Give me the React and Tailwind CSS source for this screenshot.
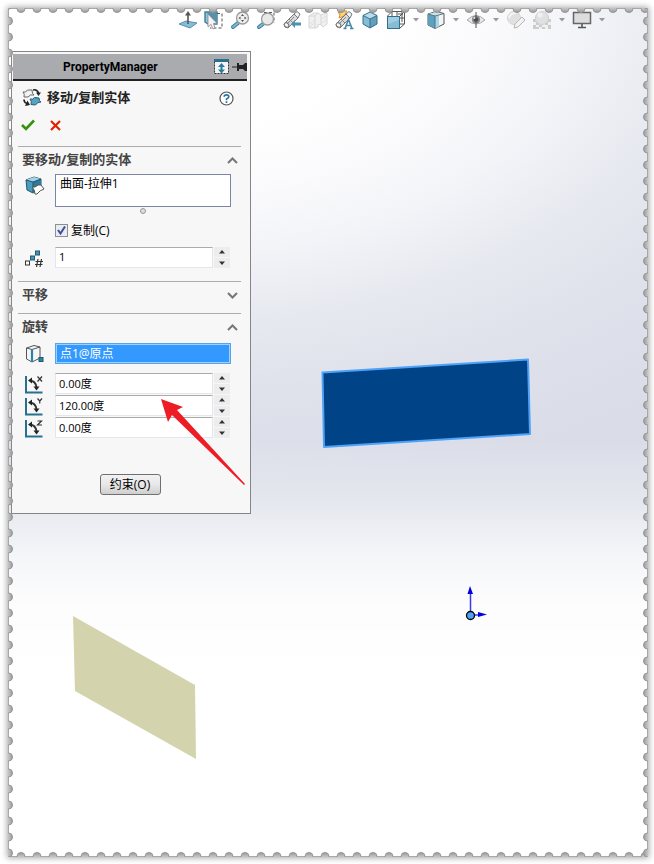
import { useState } from 'react';
import clsx from 'clsx';

function Icon({ children, size = 20, className }) {
    return (
        <svg width={size} height={size} viewBox={`0 0 ${size} ${size}`} fill="none" className={clsx('shrink-0', className)} aria-hidden="true">
            {children}
        </svg>
    );
}

const NormalToIcon = () => (
    <Icon>
        <path d="M1 14 8 11 19 13 12 18Z" fill="#86bdd4" stroke="#5591ad" />
        <path d="M10 14V3" stroke="#555" strokeWidth="1.6" />
        <path d="M7 5.5 10 1 13 5.5Z" fill="#555" />
    </Icon>
);

const SelectIcon = () => (
    <Icon>
        <path d="M1 2H13V14H4L1 12Z" fill="#8fc3d8" stroke="#3f7d98" strokeWidth="1.4" />
        <path d="M3 3 12 12V3Z" fill="#3f7d98" opacity=".7" />
        <path d="M13 3.5H18V18H6" stroke="#555" strokeDasharray="3 2" />
        <path d="M4 4V17L7 14.5 9 19 11 18 9.5 13.5H13Z" fill="#f5f5f5" stroke="#888" strokeWidth=".8" />
    </Icon>
);

const ZoomFitIcon = () => (
    <Icon>
        <path d="M8 13 3 17" stroke="#3c7e9c" strokeWidth="4" strokeLinecap="round" />
        <path d="M8 13 3 17" stroke="#7fb9d1" strokeWidth="2" strokeLinecap="round" />
        <circle cx="12.5" cy="8" r="6" fill="#eee" stroke="#999" strokeWidth="1.3" />
        <path d="M11 6 12.5 4 14 6ZM11 10 12.5 12 14 10ZM10.5 6.500 8.500 8 10.500 9.500ZM14.500 6.500 16.500 8 14.500 9.500Z" fill="#555" />
    </Icon>
);

const ZoomAreaIcon = () => (
    <Icon>
        <path d="M8 2.500H18V13" stroke="#555" strokeDasharray="3 2" />
        <path d="M7 14 3 17" stroke="#3c7e9c" strokeWidth="4" strokeLinecap="round" />
        <path d="M7 14 3 17" stroke="#7fb9d1" strokeWidth="2" strokeLinecap="round" />
        <circle cx="11.5" cy="9" r="6" fill="#e9e9e9" stroke="#999" strokeWidth="1.3" />
    </Icon>
);

const Telescope = () => (
    <g>
        <path d="M2 14 12 4 16 8 6 18Q2 18 2 14Z" fill="#d9d9d9" stroke="#777" />
        <path d="M12 4 15 1.500 18 4 16 8Z" fill="#f2f2f2" stroke="#777" />
        <path d="M7 9 11 13M5 14 12 7" stroke="#888" />
        <ellipse cx="4.500" cy="15" rx="2" ry="2.5" fill="#f8f8f8" stroke="#777" transform="rotate(-45 4.5 15)" />
    </g>
);

const PreviousViewIcon = () => (
    <Icon>
        <Telescope />
        <path d="M9 14 13 10V12.5H19V15.500H13V18Z" fill="#4f91b0" />
    </Icon>
);

const SectionIcon = () => (
    <Icon className="opacity-60">
        <path d="M1 6 6 3H10L13 5 19 3V14L15 17 13 15 10 14V17L8 18H1Z" fill="#e8e8e8" stroke="#bbb" />
        <path d="M1 6H7L10 3M7 6V18M13 5V15" stroke="#bbb" />
        <path d="M2 14 6 10M2 17 6 13M14 9 18 6M14 13 18 10" stroke="#c8c8c8" />
    </Icon>
);

const DynamicViewIcon = () => (
    <Icon>
        <path d="M4 2 7 3 9 1H13L10 6 5 8 6 5Z" fill="#fcd667" stroke="#df8c3c" />
        <Telescope />
        <path d="M11 18.500 14.500 9.500 18 18.500M12.500 15.500H17M9.500 18.500H12.500M16 18.500H19.500" stroke="#4b87a5" strokeWidth="1.6" />
    </Icon>
);

const CubeIcon = () => (
    <Icon>
        <path d="M10 2 17 5.500 10 9 3 5.500Z" fill="#b9dce9" />
        <path d="M3 5.500 10 9V18L3 14Z" fill="#86bdd6" />
        <path d="M17 5.500 10 9V18L17 14Z" fill="#639fbc" />
        <path d="M10 2 17 5.500V14L10 18 3 14V5.500ZM3 5.500 10 9 17 5.500M10 9V18" stroke="#336f8b" />
    </Icon>
);

const OrientationIcon = () => (
    <Icon>
        <path d="M6 6V1.500H18.500V14H14M1.500 6 6 1.500M14 6 18.500 1.500M14 18 18.500 14M11 1V6M14 8H18M12 4H17M16 2V12" stroke="#555" />
        <rect x="1.500" y="6.500" width="12" height="12" fill="#86bcd4" stroke="#336f8b" />
        <path d="M2 7H13V10L2 14Z" fill="#b5d9e7" opacity=".6" />
    </Icon>
);

const DisplayStyleIcon = () => (
    <Icon>
        <path d="M2 4 10 1.500 18 3.500V14L9 18.500 2 15Z" fill="#f4f4f4" stroke="#555" />
        <path d="M2 4 9 6V18.500L2 15Z" fill="#5ca2c0" />
        <path d="M9 6 13 5V16.500L9 18.500Z" fill="#a9d5e5" />
        <path d="M2 4 10 2 14 3 9 6Z" fill="#c7e4ee" />
        <path d="M2 4 9 6 18 3.500M9 6V18.500" stroke="#4e7485" />
    </Icon>
);

const EyeIcon = () => (
    <Icon>
        <path d="M1 10Q10 1 19 10 10 18 1 10Z" fill="#e8e8e8" stroke="#aaa" />
        <circle cx="10" cy="9.500" r="4" fill="#888" />
        <circle cx="10" cy="9.500" r="2.200" fill="#444" />
        <circle cx="8.500" cy="8" r="1" fill="#eee" />
        <path d="M10 2V18" stroke="#555" />
    </Icon>
);

const AppearanceIcon = () => (
    <Icon className="opacity-70">
        <circle cx="8" cy="8" r="6.500" fill="#d8d8d8" stroke="#c4c4c4" />
        <path d="M3 8Q4 3 10 3" stroke="#f4f4f4" strokeWidth="2" />
        <path d="M8 18 9 14 16 7 19 10 12 17Z" fill="#f2f2f2" stroke="#999" />
    </Icon>
);

const SceneIcon = () => (
    <Icon className="opacity-70">
        <path d="M1 9H19V19H1Z" fill="#eee" />
        <path d="M1 9H4V12H1ZM16 9H19V12H16ZM4 12H7V15H4ZM13 12H16V15H13ZM1 15H4V19H1ZM7 15H10V17H7ZM10 17H13V19H10ZM16 15H19V19H16ZM4 17H7V19H4Z" fill="#bbb" />
        <circle cx="10" cy="8" r="6.500" fill="#d8d8d8" stroke="#c0c0c0" />
        <circle cx="8" cy="5" r="2.500" fill="#eee" />
    </Icon>
);

const MonitorIcon = () => (
    <Icon>
        <rect x="1.500" y="2.500" width="17" height="11" fill="#dcdcdc" stroke="#666" strokeWidth="1.500" />
        <path d="M10 14V17M6 17.500H14" stroke="#555" strokeWidth="1.600" />
    </Icon>
);

const TOOLS = [
    { label: '正视于', icon: NormalToIcon },
    { label: '选择', icon: SelectIcon },
    { label: '整屏显示全图', icon: ZoomFitIcon },
    { label: '局部放大', icon: ZoomAreaIcon },
    { label: '上一视图', icon: PreviousViewIcon },
    { label: '剖面视图', icon: SectionIcon },
    { label: '动态注解视图', icon: DynamicViewIcon },
    { label: '等轴测', icon: CubeIcon },
    { label: '视图定向', icon: OrientationIcon, menu: true },
    { label: '显示样式', icon: DisplayStyleIcon, menu: true },
    { label: '隐藏/显示项目', icon: EyeIcon, menu: true },
    { label: '编辑外观', icon: AppearanceIcon },
    { label: '应用布景', icon: SceneIcon, menu: true },
    { label: '视图设定', icon: MonitorIcon, menu: true },
];

function Toolbar() {
    return (
        <div className="relative flex h-[43px] items-start pt-[2px] pl-[170px]">
            {TOOLS.map(({ label, icon: ToolIcon, menu }) => (
                <div key={label} className={clsx('flex', !menu && 'mr-[6px]')}>
                    <button type="button" aria-label={label} className="block">
                        <ToolIcon />
                    </button>
                    {menu && (
                        <button type="button" aria-label={`${label} 菜单`} className="flex w-5 items-center justify-center">
                            <svg width="6" height="4" viewBox="0 0 6 4"><path d="M0 0H6L3 3.500Z" fill="#999" /></svg>
                        </button>
                    )}
                </div>
            ))}
        </div>
    );
}

// Perforated edge, repeated every 16px along each side
function Perforation() {
    return (
        <>
            <svg className="absolute h-0 w-0" aria-hidden="true">
                <defs>
                    <linearGradient id="notchDown" x1="0" y1="0" x2="0" y2="1">
                        <stop offset="0.4" stopColor="#cacaca" />
                        <stop offset="1" stopColor="#999" />
                    </linearGradient>
                    <linearGradient id="notchRight" x1="0" y1="0" x2="1" y2="0">
                        <stop offset="0.4" stopColor="#cacaca" />
                        <stop offset="1" stopColor="#999" />
                    </linearGradient>
                    <pattern id="perfX" x="5" y="0" width="16" height="6" patternUnits="userSpaceOnUse">
                        <path d="M0 .5H16" stroke="#a8a8a8" />
                        <circle cx="8" cy="0.500" r="4" fill="url(#notchDown)" stroke="#959595" />
                    </pattern>
                    <pattern id="perfY" x="0" y="5" width="6" height="16" patternUnits="userSpaceOnUse">
                        <path d="M.5 0V16" stroke="#a8a8a8" />
                        <circle cx="0.500" cy="8" r="4" fill="url(#notchRight)" stroke="#959595" />
                    </pattern>
                </defs>
            </svg>
            <svg className="pointer-events-none absolute inset-x-0 top-0 h-[6px] w-full"><rect width="100%" height="6" fill="url(#perfX)" /></svg>
            <svg className="pointer-events-none absolute inset-x-0 bottom-0 h-[6px] w-full -scale-y-100"><rect width="100%" height="6" fill="url(#perfX)" /></svg>
            <svg className="pointer-events-none absolute inset-y-0 left-0 h-full w-[6px]"><rect width="6" height="100%" fill="url(#perfY)" /></svg>
            <svg className="pointer-events-none absolute inset-y-0 right-0 h-full w-[6px] -scale-x-100"><rect width="6" height="100%" fill="url(#perfY)" /></svg>
        </>
    );
}

function Scene() {
    return (
        <svg className="absolute inset-0 h-full w-full" role="img" aria-label="模型视图">
            <polygon points="314.500,364.500 520,351.500 522,426 316,439" fill="#004387" stroke="#4ea2f7" strokeWidth="2" strokeLinejoin="round" />
            <polygon points="65,608 187,677 188,751 67,683" fill="#d3d4ae" />
            <g stroke="#3a3af0" strokeWidth="1.500">
                <path d="M462.500 607V585" />
                <path d="M463 607H472" />
            </g>
            <polygon points="459.500,586 462,578 465,586" fill="#0000e0" />
            <polygon points="470,604 479,606.500 470,609" fill="#0000e0" />
            <circle cx="462.500" cy="607.500" r="4" fill="#4ea2f7" stroke="#000" strokeWidth="1.300" />
        </svg>
    );
}

function Section({ title, children, open, className }) {
    const [expanded, setExpanded] = useState(open);

    return (
        <section className={clsx('ml-[6px] mr-[9px] border-t border-[#adadad]', className)}>
            <button
                type="button"
                aria-expanded={expanded}
                onClick={() => setExpanded(!expanded)}
                className="flex h-[26px] w-full items-center justify-between pl-1 pr-[3px] text-[13px] font-bold text-[#444]"
            >
                {title}
                <svg width="11" height="7" viewBox="0 0 11 7" fill="none" className={clsx(!expanded && 'rotate-180')}>
                    <path d="M1 6 5.500 1.500 10 6" stroke="#777" strokeWidth="2" />
                </svg>
            </button>
            {expanded && children}
        </section>
    );
}

function Field({ label, defaultValue, icon }) {
    return (
        <div className="flex h-[21px] items-center">
            <span className="flex w-[37px] pl-[7px]">{icon}</span>
            <input
                aria-label={label}
                defaultValue={defaultValue}
                className="h-[21px] w-0 min-w-0 flex-1 border border-[#e3e6ec] border-t-[#ababab] bg-white px-[3px] pb-[2px] text-[11px] text-black"
            />
            <div className="ml-px mr-[11px] flex w-4 flex-col gap-px">
                <button type="button" aria-label={`${label} 增加`} className="flex h-[10px] items-center justify-center bg-[#ededed]">
                    <svg width="6" height="4" viewBox="0 0 6 4"><path d="M0 3.500H6L3 0Z" fill="#333" /></svg>
                </button>
                <button type="button" aria-label={`${label} 减少`} className="flex h-[10px] items-center justify-center bg-[#ededed]">
                    <svg width="6" height="4" viewBox="0 0 6 4"><path d="M0 .5H6L3 4Z" fill="#333" /></svg>
                </button>
            </div>
        </div>
    );
}

const AXIS_GLYPHS = {
    X: 'M12.500 1.500 17 6.500M17 1.500 12.500 6.500',
    Y: 'M12.500 1.500 14.750 4 17 1.500M14.750 4V6.500',
    Z: 'M12.500 2H16.500L12.500 6H17',
};

function AxisIcon({ axis }) {
    return (
        <Icon size={18} className="overflow-visible">
            <path d="M1 1V17.500H17.500" stroke="#27708f" strokeWidth="2" />
            <path d="M5 5.500Q10.500 6 11.500 12" stroke="#333" strokeWidth="1.800" />
            <path d="M3 5.500 7 2.500V8.500Z" fill="#222" />
            <path d="M8.500 11.500H14.500L11.500 15.500Z" fill="#222" />
            <path d={AXIS_GLYPHS[axis]} stroke="#333" strokeWidth="1.200" />
        </Icon>
    );
}

const BodyIcon = () => (
    <Icon>
        <path d="M1 4 9 1 16 3V12L8 17 2 14Z" fill="#4a9cbc" stroke="#20566e" />
        <path d="M1 4 9 1 16 3 8 6Z" fill="#a5d3e3" />
        <path d="M8 6 16 3V12L8 16Z" fill="#2d7a9b" />
        <path d="M1 4 8 6V16M8 6 16 3" stroke="#20566e" />
        <path d="M7 11Q10 12 13 9L16 9 19 13Q15 14 12 18L10 18Q10 14 7 11Z" fill="#fff" stroke="#555" />
    </Icon>
);

const CountIcon = () => (
    <Icon>
        <rect x="0.500" y="13" width="4" height="4" fill="#fff" stroke="#333" />
        <rect x="5.500" y="8" width="4" height="4" fill="#4394b6" stroke="#205a74" />
        <rect x="10.500" y="3" width="4" height="4" fill="#4394b6" stroke="#205a74" />
        <path d="M13 11 11.500 19M16.500 11 15 19M10.500 13.500H18M10 16.500H17.500" stroke="#333" strokeWidth="1.200" />
    </Icon>
);

const VertexIcon = () => (
    <Icon>
        <path d="M1.500 4 9 1.500 15 3V14L7 18 1.500 15Z" fill="#f6f6f6" stroke="#555" />
        <path d="M1.500 4 7 5.500 15 3" stroke="#555" />
        <path d="M7 6V18" stroke="#2b83a8" strokeWidth="2.200" />
        <rect x="14" y="13.500" width="4" height="4" fill="#2b83a8" stroke="#205a74" />
    </Icon>
);

const MoveCopyIcon = () => (
    <Icon>
        <path d="M1 4Q4 5 5.500 2L10 2Q10 6 12 7Q8 6 6 9L2 9Q3 6 1 4Z" fill="#f3f3f3" stroke="#666" />
        <path d="M8 11Q11 12 12.500 9.500L17 10Q17 13 19 14Q15 14 13.500 17L9 16.500Q10 13 8 11Z" fill="#55a3c3" stroke="#205a74" />
        <path d="M11 2Q15 1 16.500 5" stroke="#222" strokeWidth="1.600" />
        <path d="M14 4.500H19L16.500 8Z" fill="#222" />
        <path d="M2 11.500Q2 14.500 5 15.500" stroke="#222" strokeWidth="1.600" />
        <path d="M5.500 12.500 8 17 3 18Z" fill="#222" />
    </Icon>
);

function PanelHeader() {
    return (
        <header className="ml-px mr-[3px] flex h-[27px] items-center border-b-2 border-[#222] bg-[#a9abaf]">
            <h1 className="flex-1 pl-[50px] font-['Roboto',sans-serif] text-xs font-bold text-black">PropertyManager</h1>
            <button type="button" aria-label="展开" className="block">
                <svg width="15" height="15" viewBox="0 0 15 15" fill="none">
                    <rect x=".5" y="1.500" width="14" height="13" fill="#f5f5f5" stroke="#333" strokeDasharray="2 1" />
                    <path d="M0 0H15V3H0Z" fill="#2b6e8d" />
                    <path d="M7.500 6V12" stroke="#2b7da0" strokeWidth="2" />
                    <path d="M4 8 7.500 4 11 8ZM4 10.500 7.500 14.500 11 10.500Z" fill="#2b7da0" />
                </svg>
            </button>
            <button type="button" aria-label="固定" className="ml-[3px] block">
                <svg width="15" height="12" viewBox="0 0 15 12">
                    <path d="M0 5.500H5V2H7V4H11L13 2H15V10H13L11 8H7V10H5V6.500H0Z" fill="#222" />
                </svg>
            </button>
        </header>
    );
}

function PropertyManager() {
    return (
        <aside className="relative ml-[3px] w-60 border border-[#858585] bg-[#f7f7f7] pt-[2px] pb-[18px]">
            <PanelHeader />

            <div className="flex h-[34px] items-center pl-[10px] pr-4">
                <MoveCopyIcon />
                <h2 className="ml-[5px] flex-1 text-[13px] font-bold text-[#222]">移动/复制实体</h2>
                <button type="button" aria-label="帮助" className="block">
                    <svg width="15" height="15" viewBox="0 0 15 15" fill="none">
                        <circle cx="7.500" cy="7.500" r="6.500" fill="#fff" stroke="#555" strokeWidth="1.200" />
                        <path d="M5.200 5.800Q5.200 3.800 7.500 3.800T9.800 5.800Q9.800 7 7.500 8V9.200M7.500 10.300V12" stroke="#2876a0" strokeWidth="1.700" />
                    </svg>
                </button>
            </div>

            <div className="flex h-5 items-center gap-[15px] pl-[9px]">
                <button type="button" aria-label="确定" className="block">
                    <svg width="14" height="12" viewBox="0 0 14 12" fill="none"><path d="M1 6 5 10 13 1.500" stroke="#35920c" strokeWidth="2.600" /></svg>
                </button>
                <button type="button" aria-label="取消" className="block">
                    <svg width="11" height="11" viewBox="0 0 11 11" fill="none"><path d="M1 1 10 10M10 1 1 10" stroke="#dc2400" strokeWidth="2.200" /></svg>
                </button>
            </div>

            <Section title="要移动/复制的实体" open className="mt-[11px] pb-[13px]">
                <div className="mt-px flex items-start">
                    <span className="flex w-[37px] pt-[2px] pl-[7px]"><BodyIcon /></span>
                    <textarea
                        aria-label="要移动/复制的实体"
                        defaultValue="曲面-拉伸1"
                        className="mr-[10px] block h-[33px] w-0 min-w-0 flex-1 resize-none overflow-hidden border border-[#7b86a4] bg-white px-1 text-xs leading-[18px] text-black"
                    />
                </div>
                <span className="ml-[122px] mt-px block h-[6px] w-[6px] rounded-full border border-[#999] bg-[#ddd]" />
                <label className="ml-[37px] mt-2 flex h-[17px] items-center gap-1 text-xs text-black">
                    <input
                        type="checkbox"
                        defaultChecked
                        className="peer h-[13px] w-[13px] appearance-none border border-[#8e8f8f] bg-[#e9edf3]"
                    />
                    <svg className="pointer-events-none -ml-[15px] mr-[1px] hidden peer-checked:block" width="9" height="9" viewBox="0 0 9 9" fill="none">
                        <path d="M1 4 3.500 7.500 8 .5" stroke="#3d4f95" strokeWidth="2" />
                    </svg>
                    <span>复制(C)</span>
                </label>
                <div className="mt-2">
                    <Field label="复制数" defaultValue="1" icon={<CountIcon />} />
                </div>
            </Section>

            <Section title="平移" className="pb-[5px]" />

            <Section title="旋转" open>
                <div className="mt-[3px] flex items-center">
                    <span className="flex w-[37px] pl-[7px]"><VertexIcon /></span>
                    <input
                        aria-label="旋转参考"
                        defaultValue="点1@原点"
                        className="mr-[10px] h-[21px] w-0 min-w-0 flex-1 border-2 border-[#56a5e8] bg-[#3399ff] px-[3px] pb-[2px] text-xs text-white outline -outline-offset-2 outline-[#a3d0fa]"
                    />
                </div>
                <div className="mt-[9px] flex flex-col gap-px">
                    {['X', 'Y', 'Z'].map((axis) => (
                        <Field
                            key={axis}
                            label={`${axis} 旋转角度`}
                            defaultValue={axis === 'Y' ? '120.00度' : '0.00度'}
                            icon={<AxisIcon axis={axis} />}
                        />
                    ))}
                </div>
            </Section>

            <div className="mt-9 mr-[2px] flex justify-center">
                <button type="button" className="h-[21px] w-[61px] rounded-[3px] border border-[#707070] bg-linear-to-b from-[#f2f2f2] via-[#e8e8e8] to-[#cfcfcf] text-xs leading-none text-black">
                    约束(O)
                </button>
            </div>

            {/* pointer at the Y angle field */}
            <svg className="pointer-events-none absolute left-[149px] top-[347px]" width="86" height="88" viewBox="0 0 86 88">
                <polygon points="0,0 22,8 16,11 84,85 83,86 11,16 7,23" fill="#ee1c24" />
            </svg>
        </aside>
    );
}

export default function App() {
    return (
        <div className="flex min-h-screen bg-white pt-2 pr-[6px] pb-[7px] pl-2 font-['Open_Sans','Noto_Sans_CJK_SC',sans-serif]">
            <main className="relative flex-1 bg-[linear-gradient(180deg,rgba(255,255,255,0)_51%,rgba(255,255,255,0.3)_58%,rgba(255,255,255,0.75)_65%,rgba(255,255,255,0.93)_70%,#fff_78%),radial-gradient(75%_35%_at_28%_0%,#fff_40%,#fbfbfd_60%,#f3f4f8_82%,#e7e9f0_105%,#dfe2eb_130%,#dadde8_165%)] shadow-[0_0_6px_1px_rgba(0,0,0,0.35)]">
                <Scene />
                <Toolbar />
                <PropertyManager />
                <Perforation />
            </main>
        </div>
    );
}
